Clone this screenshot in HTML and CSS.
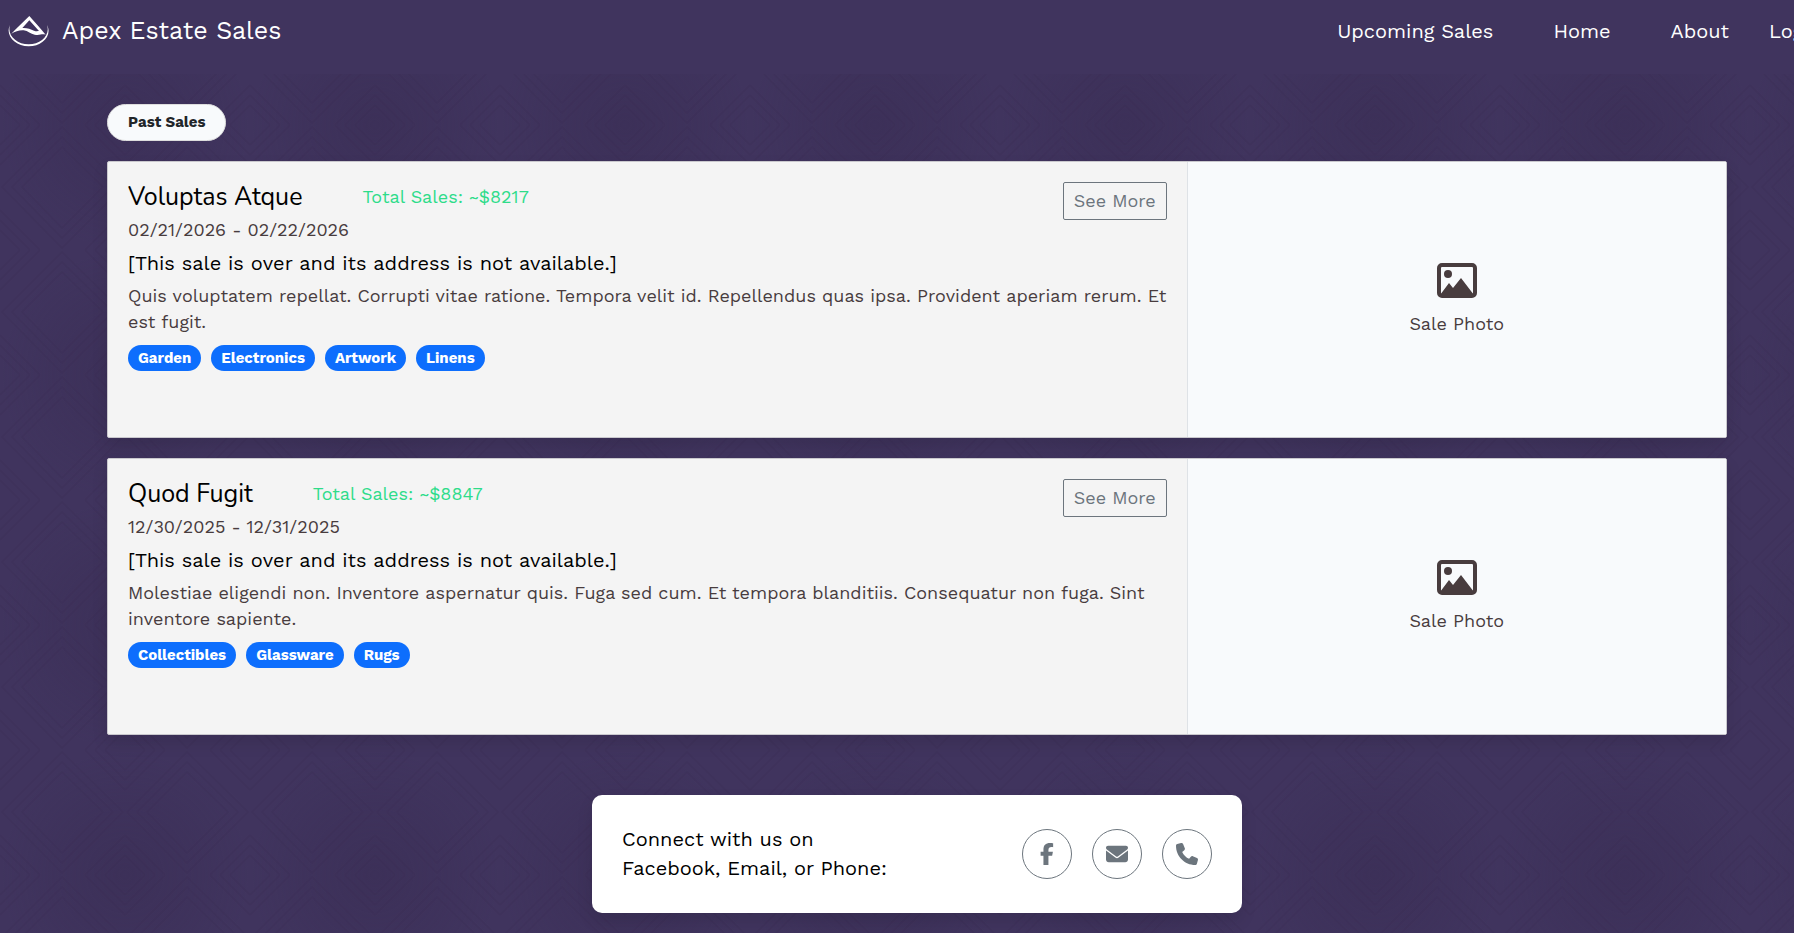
FILE: index.html
```html
<!DOCTYPE html>
<html lang="en">
<head>
<meta charset="utf-8">
<title>Apex Estate Sales</title>
<link rel="stylesheet" href="styles.css">
</head>
<body>
<header class="site-header">
  <a class="brand" href="#">
    <svg class="brand-logo" viewBox="24 22 126 96" aria-hidden="true">
      <path fill="#fff" fill-rule="evenodd" d="M34 78C50 62 68 44 88 25C104 43 120 60 137 81C126 77 120 84 104 81C92 79 84 70 71 68C58 67 46 71 34 78ZM88 38L67 61C80 60 92 64 102 69C110 72 114 70 117 70Z"/>
      <path fill="#fff" d="M30 52C14 82 46 116 86 116C126 116 158 84 141 52C152 82 122 110 86 110C50 110 20 82 30 52Z"/>
    </svg>
    <span>Apex Estate Sales</span>
  </a>
  <nav class="site-nav">
    <a href="#">Upcoming Sales</a>
    <a href="#">Home</a>
    <a href="#">About</a>
    <a class="login" href="#">Login</a>
  </nav>
</header>
<main class="page">
  <button class="pill" type="button">Past Sales</button>
  <article class="sale">
    <div class="sale-info">
      <div class="sale-top">
        <div class="sale-text">
          <div class="sale-head"><h2>Voluptas Atque</h2><span class="total">Total Sales: ~$8217</span></div>
          <p>02/21/2026 - 02/22/2026</p>
          <p class="address">[This sale is over and its address is not available.]</p>
        </div>
        <a class="more" href="#">See More</a>
      </div>
      <p>Quis voluptatem repellat. Corrupti vitae ratione. Tempora velit id. Repellendus quas ipsa. Provident aperiam rerum. Et est fugit.</p>
      <ul class="tags"><li>Garden</li><li>Electronics</li><li>Artwork</li><li>Linens</li></ul>
    </div>
    <div class="photo">
      <svg viewBox="0 0 40 36" aria-hidden="true"><rect x="2" y="2" width="36" height="31" rx="3" fill="none" stroke="currentColor" stroke-width="4"/><circle cx="11" cy="11" r="4" fill="currentColor"/><path fill="currentColor" d="M3 32L12 20L16 25L24 15L37 32Z"/></svg>
      <span>Sale Photo</span>
    </div>
  </article>
  <article class="sale">
    <div class="sale-info">
      <div class="sale-top">
        <div class="sale-text">
          <div class="sale-head"><h2>Quod Fugit</h2><span class="total">Total Sales: ~$8847</span></div>
          <p>12/30/2025 - 12/31/2025</p>
          <p class="address">[This sale is over and its address is not available.]</p>
        </div>
        <a class="more" href="#">See More</a>
      </div>
      <p>Molestiae eligendi non. Inventore aspernatur quis. Fuga sed cum. Et tempora blanditiis. Consequatur non fuga. Sint inventore sapiente.</p>
      <ul class="tags"><li>Collectibles</li><li>Glassware</li><li>Rugs</li></ul>
    </div>
    <div class="photo">
      <svg viewBox="0 0 40 36" aria-hidden="true"><rect x="2" y="2" width="36" height="31" rx="3" fill="none" stroke="currentColor" stroke-width="4"/><circle cx="11" cy="11" r="4" fill="currentColor"/><path fill="currentColor" d="M3 32L12 20L16 25L24 15L37 32Z"/></svg>
      <span>Sale Photo</span>
    </div>
  </article>
</main>
<footer class="site-footer">
  <div class="connect">
    <p>Connect with us on<br>Facebook, Email, or Phone:</p>
    <div class="socials">
      <a href="#" aria-label="Facebook"><svg viewBox="0 0 320 512"><path d="M80 299.300V512H196V299.300h86.500l18-97.800H196V166.900c0-51.700 20.300-71.500 72.700-71.500 16.300 0 29.400.4 37 1.200V7.900C291.400 4 256.400 0 236.200 0 129.300 0 80 50.500 80 159.400v42.100H14v97.800H80z"/></svg></a>
      <a href="#" aria-label="Email"><svg viewBox="0 0 512 512"><path d="M48 64C21.500 64 0 85.500 0 112c0 15.100 7.100 29.300 19.200 38.400L236.800 313.600c11.400 8.500 27 8.500 38.400 0L492.800 150.400c12.100-9.100 19.200-23.300 19.200-38.400 0-26.500-21.500-48-48-48H48zM0 176V384c0 35.300 28.700 64 64 64H448c35.300 0 64-28.700 64-64V176L294.400 339.200c-22.800 17.100-54 17.100-76.800 0L0 176z"/></svg></a>
      <a href="#" aria-label="Phone"><svg viewBox="0 0 512 512"><path d="M164.900 24.600c-7.700-18.600-28-28.500-47.400-23.200l-88 24C12.100 30.200 0 46 0 64 0 311.400 200.600 512 448 512c18 0 33.800-12.100 38.600-29.500l24-88c5.300-19.400-4.600-39.700-23.200-47.400l-96-40c-16.300-6.800-35.200-2.100-46.300 11.600L304.700 368C234.300 334.700 177.300 277.700 144 207.300L193.300 167c13.700-11.200 18.400-30 11.600-46.300l-40-96z"/></svg></a>
    </div>
  </div>
</footer>
</body>
</html>
```
FILE: styles.css
```css
* { box-sizing: border-box; }

body {
  margin: 0;
  overflow-x: hidden;
  color: #000;
  background-color: #40345e;
  background-image:
    url("data:image/svg+xml,%3Csvg xmlns='http://www.w3.org/2000/svg' width='125' height='125' fill='none' stroke='%2335294e' stroke-opacity='.2' stroke-width='2'%3E%3Cpath d='M62 2L123 62L62 123L2 62ZM62 12L113 62L62 113L12 62ZM62 22L103 62L62 103L22 62ZM0 40L40 0M0 30L30 0M0 20L20 0M85 0L125 40M95 0L125 30M105 0L125 20M0 85L40 125M0 95L30 125M0 105L20 125M125 85L85 125M125 95L95 125M125 105L105 125'/%3E%3C/svg%3E"),
    radial-gradient(circle, rgba(53, 41, 78, 0.35), rgba(53, 41, 78, 0) 70%);
  background-size: 125px 125px, 250px 250px;
  font: 18px/26px "Work Sans", Inter, "Noto Sans", sans-serif;
}

h2, p, ul { margin: 0; padding: 0; }
a { color: inherit; text-decoration: none; }

.site-header {
  display: flex;
  align-items: center;
  justify-content: space-between;
  height: 74px;
  padding: 0 0 12px 8px;
  overflow: hidden;
  color: #fff;
  background: #40345e;
}
.brand { display: flex; align-items: center; gap: 12px; font-size: 25px; }
.brand-logo { width: 42px; height: 32px; }
.site-nav { display: flex; gap: 60px; margin-right: -27px; font-size: 20px; }
.site-nav .login { margin-left: -20px; }

.page {
  display: flex;
  flex-direction: column;
  align-items: flex-start;
  gap: 20px;
  padding: 30px 67px 0 107px;
}
.pill {
  height: 37px;
  padding: 0 20px 2px;
  border: 1px solid #ddd;
  border-radius: 19px;
  color: #212529;
  background: #f8fafc;
  font: 700 15px/20px "Work Sans", Inter, sans-serif;
}
.sale {
  display: grid;
  grid-template-columns: 2fr 1fr;
  align-self: stretch;
  min-height: 277px;
  border: 1px solid #c9c8cd;
  border-radius: 2px;
  background: #f4f4f4;
  box-shadow: 0 8px 16px rgba(0, 0, 0, 0.1);
}
.sale-info {
  display: flex;
  flex-direction: column;
  gap: 5px;
  padding: 20px;
  color: #483c3e;
}
.sale-top { display: flex; align-items: flex-start; justify-content: space-between; gap: 20px; }
.sale-text { display: flex; flex-direction: column; gap: 5px; }
.sale-head { display: flex; align-items: center; gap: 60px; height: 30px; }
.sale-head h2 { color: #000; font: 400 25px/30px Nunito, "Open Sans", sans-serif; }
.total { color: #2edc8a; }
.address { color: #000; font-size: 20px; line-height: 30px; }
.tags { display: flex; gap: 10px; margin-top: 5px; list-style: none; }
.tags li {
  padding: 0 10px;
  border-radius: 13px;
  color: #fff;
  background: #0d6efd;
  font-size: 15px;
  font-weight: 700;
}
.more {
  padding: 5px 10px;
  border: 1px solid #6c757d;
  border-radius: 2px;
  color: #6c757d;
}
.photo {
  display: flex;
  flex-direction: column;
  align-items: center;
  justify-content: center;
  gap: 12px;
  border-left: 1px solid #dee2e6;
  color: #483c3e;
  background: #f8fafc;
}
.photo svg { width: 40px; height: 36px; }

.site-footer { display: flex; justify-content: center; padding: 60px 67px 20px 107px; }
.connect {
  display: flex;
  align-items: center;
  justify-content: space-between;
  width: 650px;
  max-width: 100%;
  padding: 30px;
  border-radius: 10px;
  background: #fff;
  box-shadow: 0 8px 16px rgba(0, 0, 0, 0.1);
}
.connect p { font-size: 20px; line-height: 29px; }
.socials { display: flex; gap: 20px; }
.socials a {
  display: flex;
  align-items: center;
  justify-content: center;
  width: 50px;
  height: 50px;
  border: 1px solid #6c757d;
  border-radius: 50%;
}
.socials svg { height: 22px; fill: #6c757d; }
```
